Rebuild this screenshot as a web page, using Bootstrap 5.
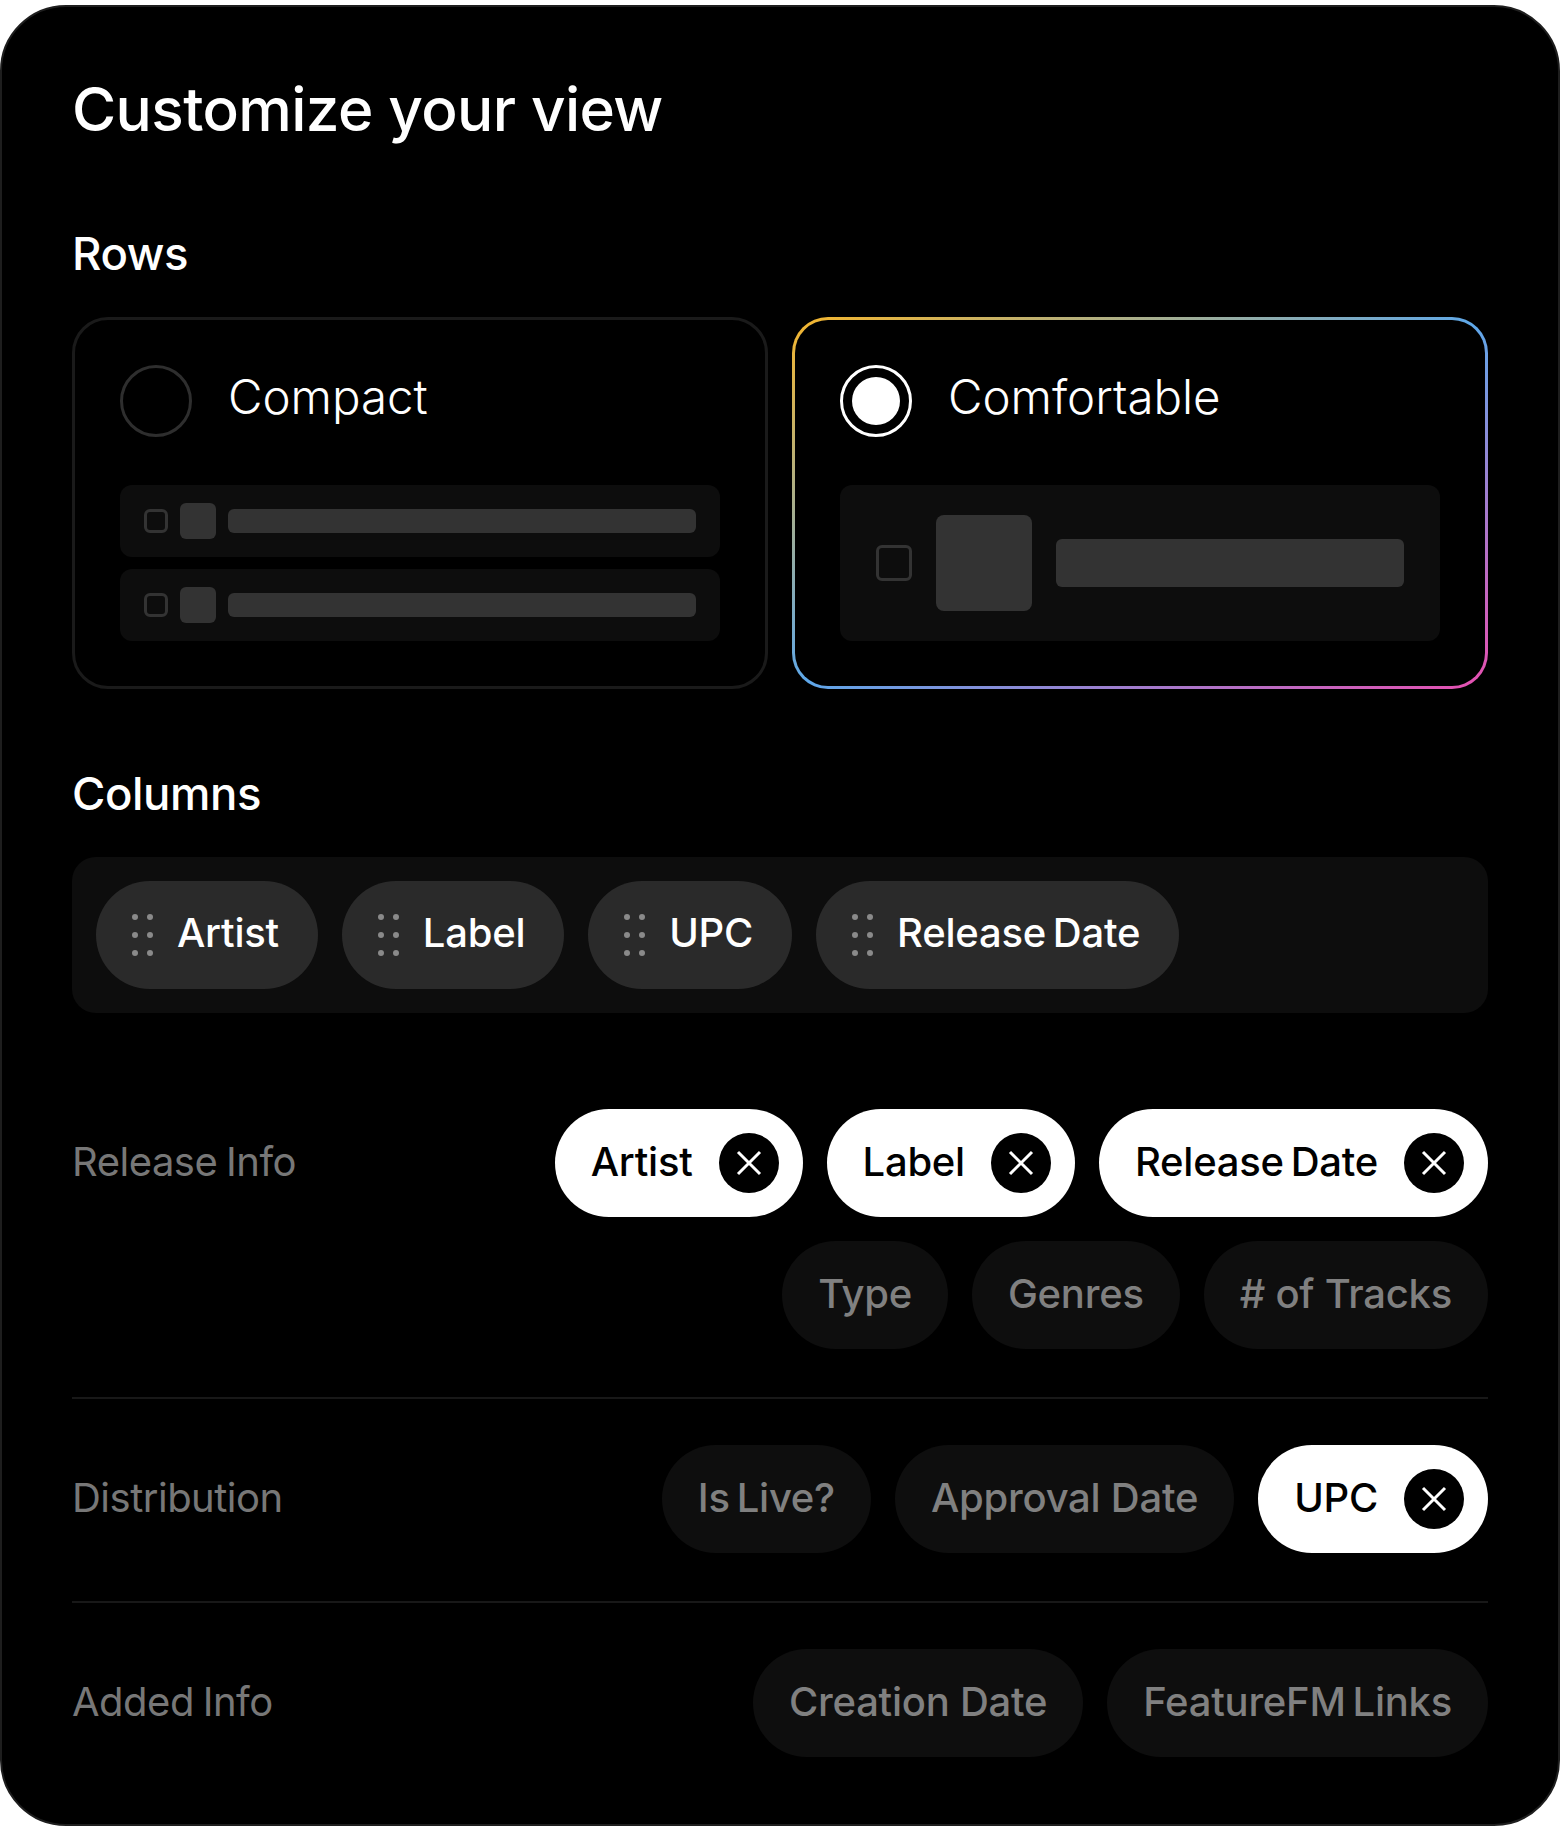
<!DOCTYPE html>
<html lang="en">
<head>
<meta charset="utf-8">
<title>Customize your view</title>
<link rel="stylesheet" href="https://cdn.jsdelivr.net/npm/bootstrap@5.3.0/dist/css/bootstrap.min.css">
<style>
html,body{margin:0;background:#fff;font-family:Inter,"Liberation Sans",sans-serif;}
.sheet{width:1560px;height:1821px;margin-top:5px;background:#000;border:2px solid #1e1e1e;border-radius:66px;padding:55px 70px 0;color:#fff;}
.ttl{font-size:60.3px;line-height:96px;font-weight:500;letter-spacing:-.6px;margin:0;}
.sub{font-size:45.5px;line-height:60px;font-weight:500;margin:0;letter-spacing:-.4px;}
.sub-rows{margin-top:66px;}
.sub-cols{margin-top:75px;}
.opt-pair{margin-top:33px;}
.tray-gap{margin-top:33px;}
.opt{width:696px;height:372px;border:3px solid #1a1a1a;border-radius:36px;padding:45px;}
.opt-on{border-color:transparent;background:linear-gradient(#000,#000) padding-box,linear-gradient(to bottom right,#f6b62c,#5ea8ea,#e84fb0) border-box;}
.dial{width:72px;height:72px;border:3px solid #2e2e2e;border-radius:50%;flex:none;}
.dial-on{border-color:#fff;padding:9px;}
.dial-on i{display:block;width:48px;height:48px;border-radius:50%;background:#fff;}
.opt-name{font-size:47.4px;line-height:60px;font-weight:300;margin:0 0 9px 36px;}
.skel-stack{gap:12px;}
.skel{background:#0d0d0d;border-radius:12px;height:72px;padding:0 24px;gap:12px;}
.skel-big{height:156px;padding:0 36px;gap:24px;}
.skel-box{width:24px;height:24px;border:3px solid #333;border-radius:6px;flex:none;}
.skel-thumb{width:36px;height:36px;background:#333;border-radius:6px;flex:none;}
.skel-bar{height:24px;background:#333;border-radius:6px;}
.skel-big .skel-box{width:36px;height:36px;}
.skel-big .skel-thumb{width:96px;height:96px;border-radius:8px;}
.skel-big .skel-bar{height:48px;}
.tray{background:#0d0d0d;border-radius:24px;padding:24px;gap:24px;height:156px;}
.chip{height:108px;border-radius:54px;font-size:40px;font-weight:500;letter-spacing:-.25px;white-space:nowrap;}
.lbl{margin-bottom:3px;}
.lbl-snug{word-spacing:-3.5px;}
.chip-drag{background:#2a2a2a;color:#fff;padding:0 39px 0 36px;}
.chip-drag .lbl{margin-bottom:5px;}
.grip{width:21px;height:42px;margin-right:24px;flex:none;}
.chip-on{background:#fff;color:#000;padding:0 24px 0 36px;}
.chip-off{background:#0e0e0e;color:#808080;padding:0 36px;}
.xbtn{width:60px;height:60px;border-radius:50%;background:#000;margin-left:26px;flex:none;}
.grp{border-bottom:2px solid #181818;padding:46px 0 48px;}
.grp-first{padding-top:0;margin-top:96px;}
.grp-last{border:0;padding-bottom:0;}
.grp-name{font-size:40px;line-height:106px;color:#777;font-weight:400;letter-spacing:-.5px;word-spacing:-2px;white-space:nowrap;}
.chips{gap:24px;}
.chips-tight{max-width:950px;}
</style>
</head>
<body>
<svg width="0" height="0" class="d-block" aria-hidden="true">
<symbol id="grip" viewBox="0 0 21 42"><g fill="#8a8a8a"><circle cx="3" cy="3" r="3"/><circle cx="18" cy="3" r="3"/><circle cx="3" cy="21" r="3"/><circle cx="18" cy="21" r="3"/><circle cx="3" cy="39" r="3"/><circle cx="18" cy="39" r="3"/></g></symbol>
<symbol id="x" viewBox="0 0 60 60"><path d="M19 19 41 41M41 19 19 41" stroke="#fff" stroke-width="3" fill="none"/></symbol>
</svg>
<main class="sheet">
<h1 class="ttl">Customize your view</h1>
<h2 class="sub sub-rows">Rows</h2>
<div class="opt-pair d-flex justify-content-between">
  <div class="opt">
    <div class="d-flex align-items-center mb-5"><span class="dial"></span><span class="opt-name">Compact</span></div>
    <div class="skel-stack d-flex flex-column">
      <div class="skel d-flex align-items-center"><span class="skel-box"></span><span class="skel-thumb"></span><span class="skel-bar flex-grow-1"></span></div>
      <div class="skel d-flex align-items-center"><span class="skel-box"></span><span class="skel-thumb"></span><span class="skel-bar flex-grow-1"></span></div>
    </div>
  </div>
  <div class="opt opt-on">
    <div class="d-flex align-items-center mb-5"><span class="dial dial-on"><i></i></span><span class="opt-name">Comfortable</span></div>
    <div class="skel skel-big d-flex align-items-center"><span class="skel-box"></span><span class="skel-thumb"></span><span class="skel-bar flex-grow-1"></span></div>
  </div>
</div>
<h2 class="sub sub-cols">Columns</h2>
<div class="tray tray-gap d-flex align-items-center">
  <div class="chip chip-drag d-flex align-items-center"><svg class="grip"><use href="#grip"/></svg><span class="lbl">Artist</span></div>
  <div class="chip chip-drag d-flex align-items-center"><svg class="grip"><use href="#grip"/></svg><span class="lbl">Label</span></div>
  <div class="chip chip-drag d-flex align-items-center"><svg class="grip"><use href="#grip"/></svg><span class="lbl">UPC</span></div>
  <div class="chip chip-drag d-flex align-items-center"><svg class="grip"><use href="#grip"/></svg><span class="lbl lbl-snug">Release Date</span></div>
</div>
<section class="grp grp-first d-flex justify-content-between">
  <div class="grp-name">Release Info</div>
  <div class="chips chips-tight d-flex flex-wrap justify-content-end">
    <div class="chip chip-on d-flex align-items-center"><span class="lbl">Artist</span><svg class="xbtn"><use href="#x"/></svg></div>
    <div class="chip chip-on d-flex align-items-center"><span class="lbl">Label</span><svg class="xbtn"><use href="#x"/></svg></div>
    <div class="chip chip-on d-flex align-items-center"><span class="lbl lbl-snug">Release Date</span><svg class="xbtn"><use href="#x"/></svg></div>
    <div class="chip chip-off d-flex align-items-center"><span class="lbl">Type</span></div>
    <div class="chip chip-off d-flex align-items-center"><span class="lbl">Genres</span></div>
    <div class="chip chip-off d-flex align-items-center"><span class="lbl"># of Tracks</span></div>
  </div>
</section>
<section class="grp d-flex justify-content-between">
  <div class="grp-name">Distribution</div>
  <div class="chips d-flex flex-wrap justify-content-end">
    <div class="chip chip-off d-flex align-items-center"><span class="lbl lbl-snug">Is Live?</span></div>
    <div class="chip chip-off d-flex align-items-center"><span class="lbl">Approval Date</span></div>
    <div class="chip chip-on d-flex align-items-center"><span class="lbl">UPC</span><svg class="xbtn"><use href="#x"/></svg></div>
  </div>
</section>
<section class="grp grp-last d-flex justify-content-between">
  <div class="grp-name">Added Info</div>
  <div class="chips d-flex flex-wrap justify-content-end">
    <div class="chip chip-off d-flex align-items-center"><span class="lbl">Creation Date</span></div>
    <div class="chip chip-off d-flex align-items-center"><span class="lbl lbl-snug">FeatureFM Links</span></div>
  </div>
</section>
</main>
<script src="https://cdn.jsdelivr.net/npm/bootstrap@5.3.0/dist/js/bootstrap.bundle.min.js"></script>
</body>
</html>
